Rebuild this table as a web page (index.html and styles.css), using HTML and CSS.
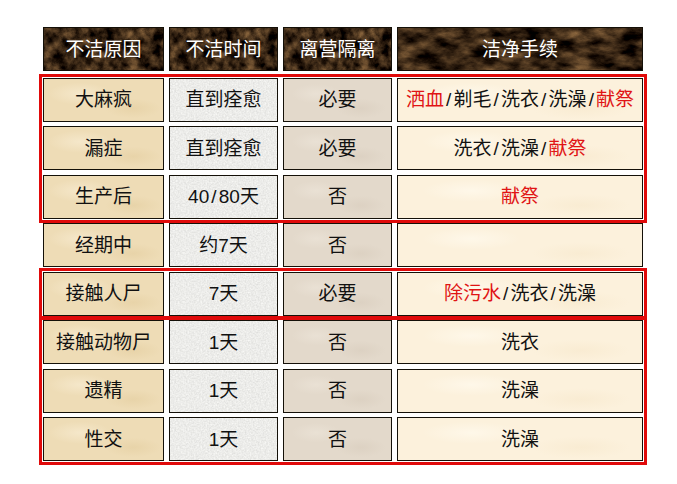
FILE: index.html
```html
<!DOCTYPE html>
<html lang="zh">
<head>
<meta charset="utf-8">
<title>不洁与洁净</title>
<link rel="stylesheet" href="styles.css">
</head>
<body>
<div class="table">
  <div class="row head">
    <div class="cell">不洁原因</div>
    <div class="cell">不洁时间</div>
    <div class="cell">离营隔离</div>
    <div class="cell">洁净手续</div>
  </div>
  <div class="group boxed">
    <div class="row">
      <div class="cell c1">大麻疯</div>
      <div class="cell c2">直到痊愈</div>
      <div class="cell c3">必要</div>
      <div class="cell c4"><span class="red">洒血</span><span class="sl">/</span>剃毛<span class="sl">/</span>洗衣<span class="sl">/</span>洗澡<span class="sl">/</span><span class="red">献祭</span></div>
    </div>
    <div class="row">
      <div class="cell c1">漏症</div>
      <div class="cell c2">直到痊愈</div>
      <div class="cell c3">必要</div>
      <div class="cell c4">洗衣<span class="sl">/</span>洗澡<span class="sl">/</span><span class="red">献祭</span></div>
    </div>
    <div class="row">
      <div class="cell c1">生产后</div>
      <div class="cell c2">40<span class="sl">/</span>80天</div>
      <div class="cell c3">否</div>
      <div class="cell c4"><span class="red">献祭</span></div>
    </div>
  </div>
  <div class="group">
    <div class="row">
      <div class="cell c1">经期中</div>
      <div class="cell c2">约7天</div>
      <div class="cell c3">否</div>
      <div class="cell c4"></div>
    </div>
  </div>
  <div class="group boxed">
    <div class="row">
      <div class="cell c1">接触人尸</div>
      <div class="cell c2">7天</div>
      <div class="cell c3">必要</div>
      <div class="cell c4"><span class="red">除污水</span><span class="sl">/</span>洗衣<span class="sl">/</span>洗澡</div>
    </div>
  </div>
  <div class="group boxed">
    <div class="row">
      <div class="cell c1">接触动物尸</div>
      <div class="cell c2">1天</div>
      <div class="cell c3">否</div>
      <div class="cell c4">洗衣</div>
    </div>
    <div class="row">
      <div class="cell c1">遗精</div>
      <div class="cell c2">1天</div>
      <div class="cell c3">否</div>
      <div class="cell c4">洗澡</div>
    </div>
    <div class="row">
      <div class="cell c1">性交</div>
      <div class="cell c2">1天</div>
      <div class="cell c3">否</div>
      <div class="cell c4">洗澡</div>
    </div>
  </div>
</div>
</body>
</html>
```
FILE: styles.css
```css
html, body {
  margin: 0;
  padding: 0;
  background: #ffffff;
}
body {
  font-family: "Liberation Sans", "Noto Sans CJK SC", sans-serif;
  font-size: 19px;
  color: #111;
}
.table {
  display: flex;
  flex-direction: column;
  gap: 4.5px;
  padding: 27px 0 14px 43px;
  width: 600px;
}
.head {
  margin-bottom: 2px;
}
.group {
  display: flex;
  flex-direction: column;
  gap: 4.5px;
}
.group.boxed {
  outline: 3px solid #e00a0a;
  outline-offset: 1.5px;
}
.row {
  display: grid;
  grid-template-columns: 121px 109px 109px 246px;
  column-gap: 5px;
}
.cell {
  box-sizing: border-box;
  height: 44px;
  border: 1px solid #141008;
  display: flex;
  align-items: center;
  justify-content: center;
  white-space: nowrap;
  line-height: 1;
  background-size: 100% 100%;
  background-repeat: no-repeat;
}
.sl {
  display: inline-block;
  width: 9.5px;
  text-align: center;
}
.head .cell {
  color: #ffffff;
  background-color: #4a311d;
  background-image: url("data:image/svg+xml,<svg xmlns='http://www.w3.org/2000/svg' width='250' height='44'><filter id='f' x='0' y='0' width='100%' height='100%' color-interpolation-filters='sRGB'><feTurbulence type='fractalNoise' baseFrequency='0.04 0.08' numOctaves='5' seed='7'/><feColorMatrix values='0.9 0 0 0 -0.24  0.7 0 0 0 -0.21  0.45 0 0 0 -0.15  0 0 0 0 1'/></filter><rect width='250' height='44' filter='url(%23f)'/></svg>");
}
.c1 {
  background-color: #eedcb6;
  background-image:
    radial-gradient(ellipse 45px 16px at 30% 35%, rgba(248,236,210,0.7), transparent 70%),
    radial-gradient(ellipse 40px 14px at 75% 70%, rgba(228,206,160,0.6), transparent 70%);
  background-size: auto;
}
.c2 {
  background-color: #ebebe8;
  background-image: url("data:image/svg+xml,<svg xmlns='http://www.w3.org/2000/svg' width='109' height='44'><filter id='f' x='0' y='0' width='100%' height='100%' color-interpolation-filters='sRGB'><feTurbulence type='fractalNoise' baseFrequency='0.6' numOctaves='2' seed='4'/><feColorMatrix values='0.14 0 0 0 0.855  0.14 0 0 0 0.855  0.14 0 0 0 0.845  0 0 0 0 1'/></filter><rect width='109' height='44' filter='url(%23f)'/></svg>");
}
.c3 {
  background-color: #e3d9cb;
  background-image:
    radial-gradient(ellipse 35px 14px at 30% 35%, rgba(236,228,216,0.7), transparent 70%),
    radial-gradient(ellipse 35px 14px at 72% 70%, rgba(214,202,186,0.5), transparent 70%);
  background-size: auto;
}
.c4 {
  background-color: #fcf1dc;
  background-image:
    radial-gradient(ellipse 70px 16px at 30% 35%, rgba(255,249,236,0.8), transparent 70%),
    radial-gradient(ellipse 70px 16px at 75% 70%, rgba(247,232,204,0.6), transparent 70%);
  background-size: auto;
}
.red {
  color: #e01414;
}
```
